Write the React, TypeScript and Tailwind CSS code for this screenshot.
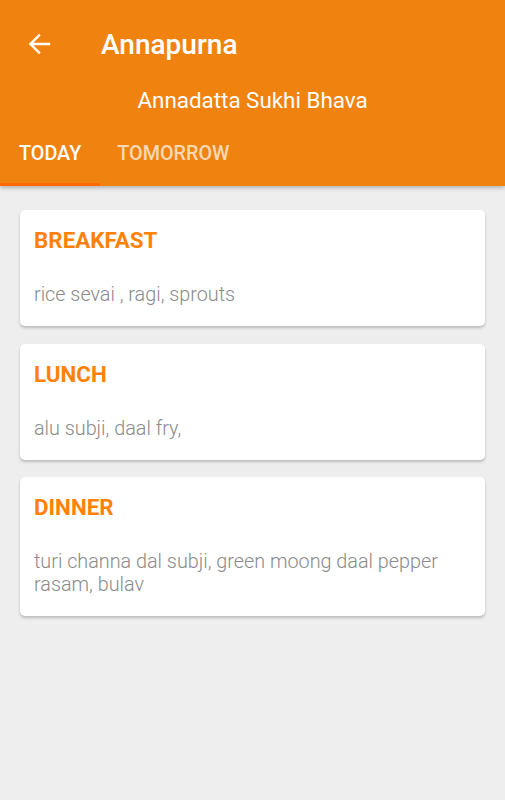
const meals = [
  { title: 'BREAKFAST', items: 'rice sevai , ragi, sprouts' },
  { title: 'LUNCH', items: 'alu subji, daal fry,' },
  { title: 'DINNER', items: 'turi channa dal subji, green moong daal pepper rasam, bulav' },
]

export default function App() {
  return (
    <div className="min-h-[800px] bg-[#eeeeee] font-['Roboto',sans-serif]">
      <header className="bg-[#f0830f] text-white shadow-[0_2px_4px_rgba(0,0,0,0.25)] relative">
        <div className="h-[88px] flex items-center">
          <button className="w-[78px] h-full flex items-center pl-[27px]">
            <svg width="24" height="24" viewBox="0 0 24 24" fill="none" stroke="white" strokeWidth="2.4" strokeLinecap="square">
              <path d="M22 12H3.5M12 3.5L3.5 12l8.5 8.5" />
            </svg>
          </button>
          <h1 className="ml-[23px] text-[28px] font-medium leading-none mt-[2px]">Annapurna</h1>
        </div>
        <p className="text-center text-[22.4px] leading-none h-[24px] flex items-center justify-center">
          Annadatta Sukhi Bhava
        </p>
        <nav className="flex h-[74px] pt-[10px]">
          <div className="relative px-[19px] flex items-center text-[19.8px] font-medium">
            TODAY
            <span className="absolute left-0 right-0 bottom-0 h-[3px] bg-[#ff6a00]" />
          </div>
          <div className="px-[17px] flex items-center text-[19.8px] font-medium text-white/70">TOMORROW</div>
        </nav>
      </header>

      <main className="px-[20px] pt-[24px] flex flex-col gap-[17.5px]">
        {meals.map((m) => (
          <section
            key={m.title}
            className="bg-white rounded-[5px] shadow-[0_2px_3px_rgba(0,0,0,0.22)] px-[14px] pt-[18px] pb-[19.5px]"
          >
            <h2 className="text-[22.4px] font-bold text-[#ff8208] leading-[24px]">{m.title}</h2>
            <p className="mt-[32px] text-[19.8px] leading-[22.5px] text-[#8a8a8a] font-light pr-[20px]">{m.items}</p>
          </section>
        ))}
      </main>
    </div>
  )
}
